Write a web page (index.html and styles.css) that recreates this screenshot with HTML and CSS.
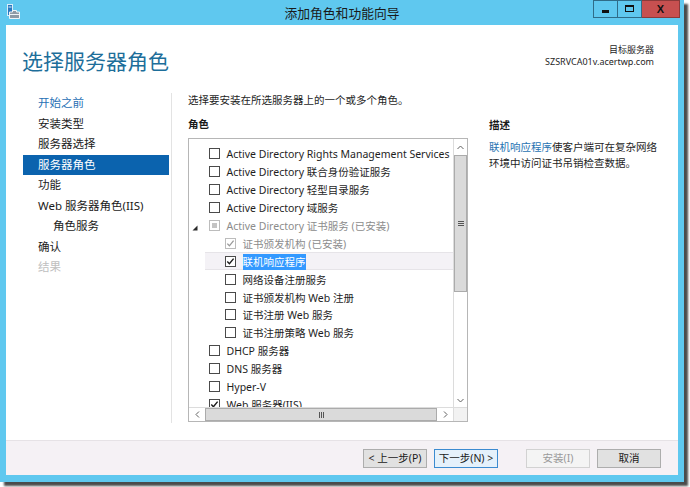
FILE: index.html
```html
<!DOCTYPE html>
<html lang="zh-CN">
<head>
<meta charset="utf-8">
<title>添加角色和功能向导</title>
<link rel="stylesheet" href="styles.css">
</head>
<body>
<div class="window">
  <div class="titlebar">
    <div class="tb-left">
      <svg class="app-icon" width="16" height="16" viewBox="0 0 16 16">
        <rect x="1.5" y="0.5" width="5" height="11" fill="#2a78c0" stroke="#d8eefa" stroke-width="1"/>
        <line x1="2.5" y1="3" x2="5.5" y2="3" stroke="#d8eefa" stroke-width="1"/>
        <path d="M6.5 6.5 h4 v1.5 h3 v6.5 h-10 v-6.5 h3 z" fill="#8c9aa6" stroke="#eef4f8" stroke-width="1"/>
        <line x1="3.5" y1="10.5" x2="13.5" y2="10.5" stroke="#eef4f8" stroke-width="1"/>
      </svg>
    </div>
    <div class="title">添加角色和功能向导</div>
    <div class="tb-right">
      <div class="wb wb-min"><span class="min-glyph"></span></div>
      <div class="wb wb-max"><span class="max-glyph"></span></div>
      <div class="wb wb-close">X</div>
    </div>
  </div>

  <div class="client">
    <div class="header">
      <h1>选择服务器角色</h1>
      <div class="target">
        <div>目标服务器</div>
        <div>SZSRVCA01v.acertwp.com</div>
      </div>
    </div>

    <div class="main">
      <nav class="nav">
        <div class="nav-item link">开始之前</div>
        <div class="nav-item">安装类型</div>
        <div class="nav-item">服务器选择</div>
        <div class="nav-item active">服务器角色</div>
        <div class="nav-item">功能</div>
        <div class="nav-item">Web 服务器角色(IIS)</div>
        <div class="nav-item sub">角色服务</div>
        <div class="nav-item">确认</div>
        <div class="nav-item disabled">结果</div>
      </nav>

      <div class="content">
        <p class="intro">选择要安装在所选服务器上的一个或多个角色。</p>
        <div class="columns">
          <div class="roles-col">
            <h2>角色</h2>
            <div class="listbox">
              <div class="viewport">
                <div class="row"><span class="exp"></span><span class="cb"></span><span class="lbl">Active Directory Rights Management Services</span></div>
                <div class="row"><span class="exp"></span><span class="cb"></span><span class="lbl">Active Directory 联合身份验证服务</span></div>
                <div class="row"><span class="exp"></span><span class="cb"></span><span class="lbl">Active Directory 轻型目录服务</span></div>
                <div class="row"><span class="exp"></span><span class="cb"></span><span class="lbl">Active Directory 域服务</span></div>
                <div class="row dis"><span class="exp"><svg width="6" height="6" viewBox="0 0 6 6"><polygon points="5.5,0.5 5.5,5.5 0.5,5.5" fill="#2b2b2b"/></svg></span><span class="cb cb-dis"><span class="ind"></span></span><span class="lbl">Active Directory 证书服务 (已安装)</span></div>
                <div class="row lvl1 dis"><span class="exp"></span><span class="cb cb-dis"><svg width="9" height="9" viewBox="0 0 9 9"><polyline points="1.3,4.6 3.4,6.8 7.6,1.6" fill="none" stroke="#9a9a9a" stroke-width="1.3"/></svg></span><span class="lbl">证书颁发机构 (已安装)</span></div>
                <div class="row lvl1 sel"><span class="exp"></span><span class="cb"><svg width="9" height="9" viewBox="0 0 9 9"><polyline points="1.3,4.6 3.4,6.8 7.6,1.6" fill="none" stroke="#1a1a1a" stroke-width="1.4"/></svg></span><span class="lbl"><span class="hl">联机响应程序</span></span></div>
                <div class="row lvl1"><span class="exp"></span><span class="cb"></span><span class="lbl">网络设备注册服务</span></div>
                <div class="row lvl1"><span class="exp"></span><span class="cb"></span><span class="lbl">证书颁发机构 Web 注册</span></div>
                <div class="row lvl1"><span class="exp"></span><span class="cb"></span><span class="lbl">证书注册 Web 服务</span></div>
                <div class="row lvl1"><span class="exp"></span><span class="cb"></span><span class="lbl">证书注册策略 Web 服务</span></div>
                <div class="row"><span class="exp"></span><span class="cb"></span><span class="lbl">DHCP 服务器</span></div>
                <div class="row"><span class="exp"></span><span class="cb"></span><span class="lbl">DNS 服务器</span></div>
                <div class="row"><span class="exp"></span><span class="cb"></span><span class="lbl">Hyper-V</span></div>
                <div class="row"><span class="exp"></span><span class="cb"><svg width="9" height="9" viewBox="0 0 9 9"><polyline points="1.3,4.6 3.4,6.8 7.6,1.6" fill="none" stroke="#1a1a1a" stroke-width="1.4"/></svg></span><span class="lbl">Web 服务器(IIS)</span></div>
              </div>
              <div class="vscroll">
                <div class="sb-btn"><svg width="7" height="5" viewBox="0 0 7 5"><polyline points="0.5,4 3.5,1 6.5,4" fill="none" stroke="#606060" stroke-width="1"/></svg></div>
                <div class="vthumb"><span class="grip-h"></span></div>
                <div class="vtrack"></div>
                <div class="sb-btn"><svg width="7" height="5" viewBox="0 0 7 5"><polyline points="0.5,1 3.5,4 6.5,1" fill="none" stroke="#606060" stroke-width="1"/></svg></div>
              </div>
              <div class="hscroll">
                <div class="sb-btn"><svg width="5" height="7" viewBox="0 0 5 7"><polyline points="4,0.5 1,3.5 4,6.5" fill="none" stroke="#606060" stroke-width="1"/></svg></div>
                <div class="hthumb"><span class="grip-v"></span></div>
                <div class="sb-btn"><svg width="5" height="7" viewBox="0 0 5 7"><polyline points="1,0.5 4,3.5 1,6.5" fill="none" stroke="#606060" stroke-width="1"/></svg></div>
              </div>
              <div class="corner"></div>
            </div>
          </div>
          <div class="desc-col">
            <h2>描述</h2>
            <p class="desc"><span class="link">联机响应程序</span>使客户端可在复杂网络环境中访问证书吊销检查数据。</p>
          </div>
        </div>
      </div>
    </div>

    <div class="footer">
      <button class="btn">&lt; 上一步(P)</button>
      <button class="btn default">下一步(N) &gt;</button>
      <button class="btn disabled gap">安装(I)</button>
      <button class="btn">取消</button>
    </div>
  </div>
</div>
</body>
</html>
```

FILE: styles.css
```css
* {
  box-sizing: border-box;
  margin: 0;
  padding: 0;
}

html, body {
  width: 690px;
  height: 487px;
  overflow: hidden;
  background: #ffffff;
}

body {
  font-family: "Noto Sans", "Noto Sans CJK SC", sans-serif;
  font-size: 10.5px;
  color: #1e1e1e;
}

.window {
  width: 684px;
  height: 482px;
  background: #5fc8ef;
  box-shadow: 4px 4px 2px rgba(30, 30, 30, 0.8);
  display: flex;
  flex-direction: column;
}

/* title bar */
.titlebar {
  height: 25px;
  flex: none;
  display: grid;
  grid-template-columns: 1fr auto 1fr;
  align-items: start;
}

.tb-left {
  padding: 4px 0 0 6px;
}

.app-icon {
  display: block;
}

.title {
  font-family: "Noto Sans CJK SC", sans-serif;
  font-size: 12.8px;
  line-height: 26px;
  color: #1a1a1a;
}

.tb-right {
  display: flex;
  justify-content: flex-end;
  padding-right: 4px;
}

.wb {
  height: 18px;
  border: 1px solid #2f6c88;
  display: flex;
  align-items: center;
  justify-content: center;
}

.wb + .wb {
  border-left: none;
}

.wb-min {
  width: 25px;
}

.wb-max {
  width: 24px;
}

.wb-close {
  width: 38px;
  background: #c75050;
  border-color: #8a3a3a;
  font-family: "Liberation Sans", sans-serif;
  font-weight: bold;
  font-size: 11px;
  color: #111;
}

.min-glyph {
  width: 7px;
  height: 3px;
  background: #111;
  margin-top: 5px;
}

.max-glyph {
  width: 9px;
  height: 7px;
  border: 1.5px solid #111;
  border-top-width: 2px;
  margin-top: -2px;
}

/* client area */
.client {
  flex: 1;
  margin: 0 6px 7px 6px;
  background: #ffffff;
  display: flex;
  flex-direction: column;
}

.header {
  height: 68px;
  flex: none;
  display: flex;
  justify-content: space-between;
  padding: 0 24px 0 16px;
}

.header h1 {
  font-family: "Noto Sans CJK SC", sans-serif;
  font-weight: normal;
  font-size: 21px;
  line-height: 26px;
  margin-top: 22px;
  color: #1d6e9a;
}

.target {
  margin-top: 19px;
  text-align: right;
  font-size: 9px;
  line-height: 12px;
  color: #1e1e1e;
}

.main {
  height: 330px;
  flex: none;
  display: flex;
}

.nav {
  width: 166px;
  flex: none;
  border-right: 1px solid #e3e3e3;
  padding: 0 2px 0 17px;
}

.nav-item {
  height: 20.5px;
  line-height: 20.5px;
  padding-left: 15px;
  font-size: 11.5px;
  color: #1a1a1a;
  white-space: nowrap;
}

.nav-item.link {
  color: #2770b5;
}

.nav-item.active {
  background: #0b63ae;
  color: #ffffff;
}

.nav-item.sub {
  padding-left: 30px;
}

.nav-item.disabled {
  color: #c0c0c0;
}

.content {
  flex: 1;
  padding-left: 16px;
  display: flex;
  flex-direction: column;
}

.intro {
  line-height: 14px;
}

.columns {
  display: flex;
}

.roles-col {
  width: 280px;
  flex: none;
}

h2 {
  font-size: 10.5px;
  font-weight: bold;
  line-height: 14px;
  margin-top: 10px;
  color: #1a1a1a;
}

.listbox {
  margin-top: 7px;
  height: 284px;
  border: 1px solid #b6b6b6;
  display: grid;
  grid-template-columns: 1fr 14px;
  grid-template-rows: 1fr 14px;
}

.viewport {
  overflow: hidden;
  padding-top: 6px;
}

.row {
  height: 17.9px;
  display: flex;
  align-items: center;
  white-space: nowrap;
}

.row.lvl1 {
  margin-left: 16px;
}

.row.dis {
  color: #8c8c8c;
}

.row.sel {
  background: #f4f2f6;
  border-top: 1px solid #e6e4e8;
  border-bottom: 1px solid #e6e4e8;
}

.exp {
  width: 20px;
  flex: none;
  display: flex;
  align-items: center;
  padding-left: 3px;
  padding-top: 4px;
}

.cb {
  width: 11px;
  height: 11px;
  flex: none;
  border: 1px solid #4a4a4a;
  background: #ffffff;
  display: flex;
  align-items: center;
  justify-content: center;
  margin-right: 6.5px;
}

.cb-dis {
  border-color: #bcbcbc;
}

.ind {
  width: 5px;
  height: 5px;
  background: #c4c4c4;
}

.hl {
  background: #3399ff;
  color: #ffffff;
  padding: 1px 0;
}

.vscroll {
  border-left: 1px solid #dcdcdc;
  display: flex;
  flex-direction: column;
}

.sb-btn {
  flex: none;
  width: 16px;
  height: 16px;
  display: flex;
  align-items: center;
  justify-content: center;
  background: #ffffff;
}

.vscroll .sb-btn {
  width: auto;
  height: 16px;
}

.vscroll .sb-btn:last-child {
  height: 14px;
}

.vthumb {
  height: 137px;
  flex: none;
  background: #dadada;
  border: 1px solid #ababab;
  display: flex;
  align-items: center;
  justify-content: center;
}

.grip-h {
  width: 6px;
  height: 5px;
  border-top: 1px solid #555;
  border-bottom: 1px solid #555;
  position: relative;
}

.grip-h::after {
  content: "";
  position: absolute;
  left: 0;
  right: 0;
  top: 1px;
  border-top: 1px solid #555;
}

.vtrack {
  flex: 1;
  background: #ffffff;
}

.hscroll {
  border-top: 1px solid #dcdcdc;
  display: flex;
}

.hscroll .sb-btn {
  height: auto;
}

.hthumb {
  flex: 1;
  background: #dadada;
  border: 1px solid #ababab;
  display: flex;
  align-items: center;
  justify-content: center;
}

.grip-v {
  width: 5px;
  height: 6px;
  border-left: 1px solid #555;
  border-right: 1px solid #555;
  position: relative;
}

.grip-v::after {
  content: "";
  position: absolute;
  top: 0;
  bottom: 0;
  left: 1px;
  border-left: 1px solid #555;
}

.corner {
  background: #f2f2f2;
  border-top: 1px solid #dcdcdc;
  border-left: 1px solid #dcdcdc;
}

.desc-col {
  margin-left: 21px;
  width: 172px;
}

.desc-col h2 {
  margin-top: 11px;
}

.desc {
  margin-top: 7px;
  line-height: 16px;
}

.link {
  color: #2873b2;
}

/* footer */
.footer {
  margin-top: 17px;
  height: 35px;
  flex: none;
  background: #f5f1f5;
  border-top: 1px solid #e6e2e6;
  display: flex;
  justify-content: flex-end;
  align-items: flex-start;
  gap: 7px;
  padding: 8px 17px 0 0;
}

.btn {
  width: 64px;
  height: 19px;
  font-family: "Noto Sans", "Noto Sans CJK SC", sans-serif;
  font-size: 10.5px;
  color: #1a1a1a;
  background: #e1e1e1;
  border: 1px solid #adadad;
  line-height: 17px;
}

.btn.default {
  background: #e5f1fb;
  border-color: #3c8bd0;
}

.btn.disabled {
  background: #f4f4f4;
  border-color: #d2d2d2;
  color: #9a9a9a;
}

.btn.gap {
  margin-left: 21px;
}
```
